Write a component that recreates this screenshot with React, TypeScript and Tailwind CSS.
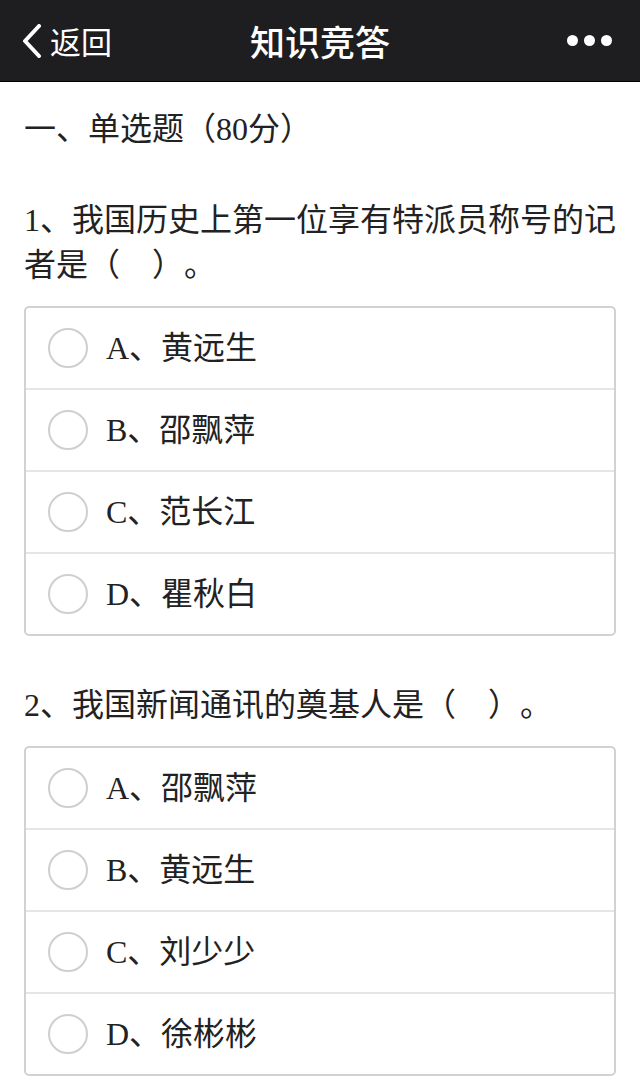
import React from "react";

const FONT = '"Liberation Serif", "Noto Sans CJK SC", serif';
const SANS = '"Noto Sans CJK SC", "Noto Sans", sans-serif';

function Radio() {
  return <span className="block w-[40px] h-[40px] rounded-full border-2 border-[#cfcfcf] bg-white shrink-0" />;
}

function Options({ items }: { items: string[] }) {
  return (
    <div className="mt-[18px] border-2 border-[#d2d2d2] rounded-[5px] bg-white">
      {items.map((t, i) => (
        <div
          key={i}
          className={`flex items-center pl-[22px] ${i > 0 ? "h-[82px] border-t-2 border-[#e6e6e6]" : "h-[80px]"}`}
        >
          <Radio />
          <span className="ml-[18px] text-[32px] leading-none text-[#222]">{t}</span>
        </div>
      ))}
    </div>
  );
}

export default function App() {
  return (
    <div className="w-[640px] min-h-[1091px] bg-white [text-spacing-trim:space-all]" style={{ fontFamily: FONT }}>
      <div
        className="h-[82px] bg-[#1e1e20] border-b-[1px] border-black flex items-center justify-between relative px-[20px]"
        style={{ fontFamily: SANS }}
      >
        <div className="flex items-center text-white">
          <svg width="24" height="34" viewBox="0 0 24 34" className="mr-[6px]">
            <path d="M19 2 L5 17 L19 32" stroke="white" strokeWidth="4" fill="none" strokeLinecap="round" strokeLinejoin="round" />
          </svg>
          <span className="text-[31px] leading-none">返回</span>
        </div>
        <div className="absolute left-0 right-0 text-center text-white text-[35px] font-medium leading-none pointer-events-none">
          知识竞答
        </div>
        <div className="flex items-center gap-[6px] mr-[8px]">
          <span className="block w-[11px] h-[11px] rounded-full bg-white" />
          <span className="block w-[11px] h-[11px] rounded-full bg-white" />
          <span className="block w-[11px] h-[11px] rounded-full bg-white" />
        </div>
      </div>
      <div className="px-[24px] text-[#222]">
        <div className="mt-[25px] text-[32px] leading-[45px]">一、单选题（80分）</div>
        <div className="mt-[46px] text-[32px] leading-[45px]">
          1、我国历史上第一位享有特派员称号的记者是（　）。
        </div>
        <Options items={["A、黄远生", "B、邵飘萍", "C、范长江", "D、瞿秋白"]} />
        <div className="mt-[47px] text-[32px] leading-[45px]">2、我国新闻通讯的奠基人是（　）。</div>
        <Options items={["A、邵飘萍", "B、黄远生", "C、刘少少", "D、徐彬彬"]} />
      </div>
    </div>
  );
}
